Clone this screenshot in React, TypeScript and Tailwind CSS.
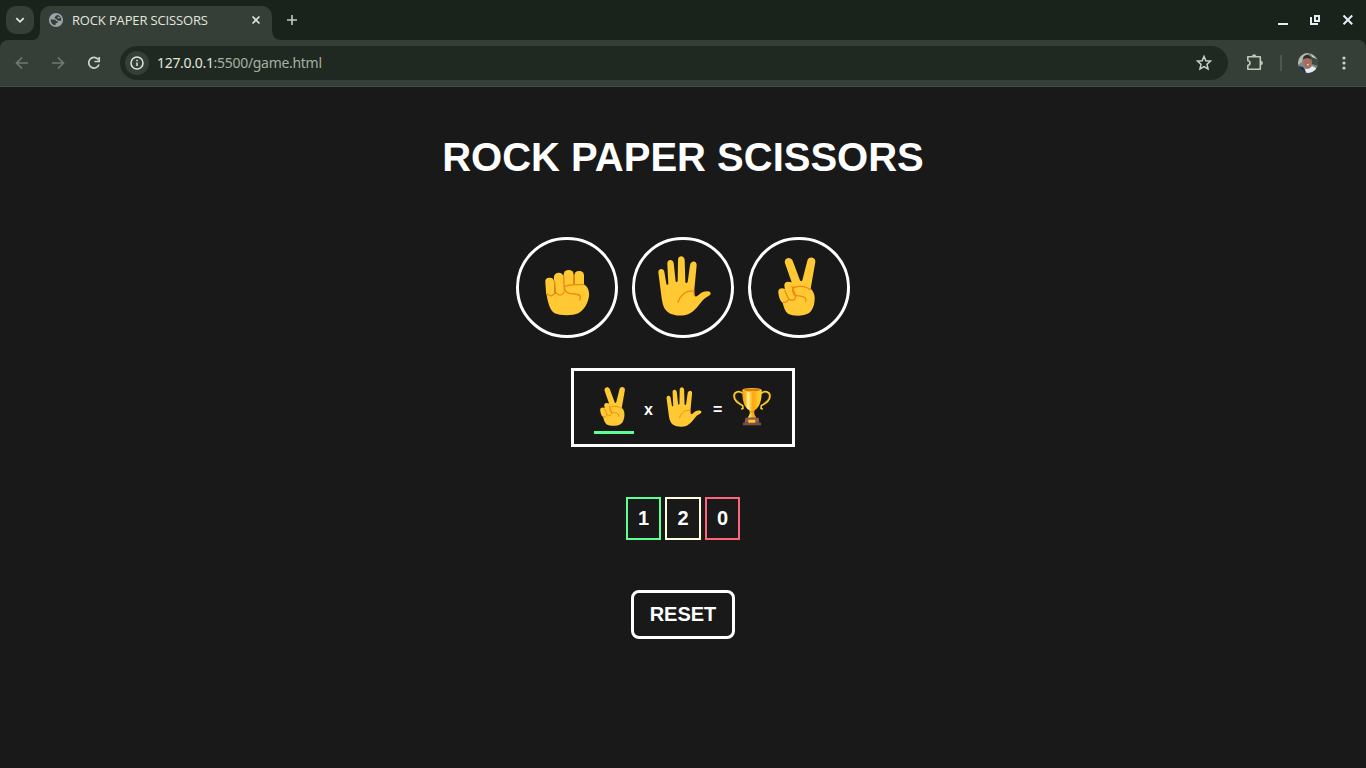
import React from "react";

const fill = "#ffc933";
const line = "#f08a12";

function Rock({ className }: { className: string }) {
  return (
    <svg viewBox="81 77 180 180" className={className}>
      <g fill={fill}>
        <path d="M109 185C112 215 120 240 134 249C150 257 189 257 205 249C224 238 234 218 237 198C239 180 232 165 218 161L165 163L140 190Z" />
        <rect x="193" y="122" width="29" height="55" rx="13" />
        <rect x="161" y="119" width="30" height="60" rx="14" />
        <rect x="133" y="127" width="29" height="70" rx="14" transform="rotate(-4 147 160)" />
        <rect x="107" y="142" width="26" height="55" rx="12" transform="rotate(-4 120 170)" />
      </g>
      <path d="M134 155L137 187M161 137L163 180M191 135L192 162M112 190Q123 204 137 187Q151 203 163 185M163 170C169 162 192 164 220 162M164 172C163 184 174 191 193 191C210 191 215 199 209 209" fill="none" stroke={line} strokeWidth="4" strokeLinecap="round" />
    </svg>
  );
}

function Paper({ className }: { className: string }) {
  return (
    <svg viewBox="81 77 180 180" className={className}>
      <path d="M97 126C97 114 113 113 115 124L121 160Q122 165 127 162L124 100C123 86 141 85 143 98L149 153Q150 158 155 153L156 89C156 74 175 74 176 89L178 155Q180 161 185 155L192 105C194 90 213 90 212 105L204 188C204 198 207 199 213 198C222 190 229 184 242 183C252 182 257 188 252 194C245 200 235 203 229 211C216 226 207 242 188 251C169 259 142 256 129 248C113 238 110 222 107 204Z" fill={fill} />
      <path d="M156 216C164 192 178 180 204 182Q203 188 205 196" fill="none" stroke={line} strokeWidth="4" strokeLinecap="round" />
    </svg>
  );
}

function Scissors({ className }: { className: string }) {
  return (
    <svg viewBox="81 77 180 180" className={className}>
      <path d="M129 99C124 82 146 77 152 91L174 150Q178 156 181 150L196 91C199 76 222 79 220 95L206 175C214 182 219 194 218 207C217 226 212 241 200 249C184 258 153 258 138 250C128 242 125 229 122 217C114 213 110 196 109 187C107 174 120 171 129 176C125 162 127 156 136 154L149 156Z" fill={fill} />
      <path d="M129 181L140 206Q136 217 124 216M140 206C148 213 161 210 161 198L150 168M161 198C150 187 148 173 160 170C174 166 195 169 204 178M158 193C170 201 180 194 189 202Q194 207 191 214" fill="none" stroke={line} strokeWidth="4" strokeLinecap="round" strokeLinejoin="round" />
    </svg>
  );
}

function Trophy({ className }: { className: string }) {
  return (
    <svg viewBox="156 72 120 120" className={className}>
      <defs>
        <linearGradient id="cup" x1="0" x2="1" y1="0" y2="0">
          <stop offset="0" stopColor="#f79a16" />
          <stop offset=".18" stopColor="#ffb71c" />
          <stop offset=".3" stopColor="#fff3b0" />
          <stop offset=".44" stopColor="#ffca28" />
          <stop offset=".55" stopColor="#fda31a" />
          <stop offset=".8" stopColor="#ffc51f" />
          <stop offset="1" stopColor="#ffd52e" />
        </linearGradient>
      </defs>
      <path d="M191 96C178 84 162 89 162 102C162 119 177 125 188 131L189 139L184 142M241 96C254 84 270 89 270 102C270 119 255 125 244 131L243 139L248 142" fill="none" stroke="#ffca28" strokeWidth="5" />
      <path d="M165 97C163 109 171 117 181 123M267 97C269 109 261 117 251 123" fill="none" stroke="#f59a16" strokeWidth="1.5" />
      <path d="M187 84H245C246 114 239 136 224 145C221 150 222 158 229 167H203C210 159 211 150 208 145C192 136 186 113 187 84Z" fill="url(#cup)" />
      <ellipse cx="216" cy="84" rx="29" ry="6" fill="#ffca28" />
      <ellipse cx="216" cy="84" rx="25" ry="3.8" fill="#d97b12" />
      <path d="M209 148Q216 152 223 148" stroke="#e78a12" strokeWidth="3" fill="none" />
      <path d="M196 167H236L238 182H194Z" fill="#8d5b50" />
      <path d="M189 182H243V190H189Z" fill="#795046" />
      <rect x="205" y="173" width="21" height="9" rx="1" fill="#ffc928" />
    </svg>
  );
}

function Avatar() {
  return (
    <svg viewBox="0 0 20 20" className="size-5">
      <defs><clipPath id="face"><circle cx="10" cy="10" r="10" /></clipPath></defs>
      <g clipPath="url(#face)">
        <path fill="#7f8880" d="M0 0h20v20H0z" />
        <path fill="#b5b9b1" d="M0 3l6-3h5L5 4 4 9 0 12z" />
        <path fill="#414a43" d="M13 3l7 4v6l-6-2z" />
        <path fill="#d6d8d2" d="M13 1l6 5-5-2z" />
        <path fill="#202d4a" d="M0 13l5 1 4 6H0z" />
        <path fill="#e8e9f4" d="M8 20l-1-4 5-1 2-2 4 2 1 5z" />
        <path fill="#a96c58" d="M5.500 6l3-2L13 6l1 5-2 4-3 1-3-4z" />
        <path fill="#302c31" d="M5 6.500q0-4.500 4-4.500t4.500 4.500L10 5 7 5.500z" />
        <path fill="#f6e9e3" d="M8.500 11.500l2.500-.7-1 1.900z" />
      </g>
    </svg>
  );
}

function Browser() {
  return (
    <header className="h-[87px] bg-[#1a231b] font-['Noto_Sans',sans-serif]">
      <div className="flex h-10 items-start pl-1.5">
        <button className="mt-1.5 flex size-7 items-center justify-center rounded-[10px] bg-[#363f37]">
          <svg viewBox="0 0 28 28" className="size-7" fill="none" stroke="#e2e5df" strokeWidth="1.8"><path d="M10.300 12.200l3.700 3.600 3.700-3.600" /></svg>
        </button>
        <div className="mt-1.5 flex h-[34px] w-[6px] items-end justify-end">
          <svg viewBox="0 0 6 10" className="h-2.5 w-1.5"><path d="M6 0v10H0Q6 8 6 0" fill="#363f37" /></svg>
        </div>
        <div className="mt-1.5 flex h-[34px] w-[232px] items-start rounded-t-[10px] bg-[#363f37] pt-[6px] pl-2">
          <svg viewBox="0 0 16 16" className="size-4 shrink-0">
            <circle cx="8" cy="8" r="7.100" fill="#9ca1aa" />
            <path d="M9.200 2.700C8.600 4.300 7 3.700 6.700 5.200S8.500 6.600 9 7.800 11 9 13.300 8.400C13.500 5.500 11.800 3.300 9.200 2.700z" fill="#363f37" />
            <path d="M2.600 7.600H6c2 0 1.500 1.600 3 1.700s1 1.700-.3 1.800-1 1-1.300 2.300C4.600 13.100 2.500 10.800 2.600 7.600z" fill="#363f37" />
            <path d="M9.500 4.800h2.200v1.500H9.500z" fill="#9ca1aa" />
          </svg>
          <span className="ml-2 w-[176px] whitespace-nowrap font-['Open_Sans',sans-serif] text-[13px] leading-[17px] tracking-[-0.15px] text-[#e3e6df]">ROCK PAPER SCISSORS</span>
          <svg viewBox="0 0 16 16" className="size-4 shrink-0" stroke="#e2e5df" strokeWidth="1.600"><path d="M4.500 4.500l7 7M11.500 4.500l-7 7" /></svg>
        </div>
        <svg viewBox="0 0 10 10" className="mt-[30px] size-2.5"><path d="M0 0v10h10Q0 10 0 0" fill="#363f37" /></svg>
        <svg viewBox="0 0 20 20" className="mt-2.5 size-5" stroke="#c5cdbf" strokeWidth="1.600"><path d="M10 5v10M5 10h10" /></svg>
        <div className="ml-auto flex pt-2.5">
          <svg viewBox="0 0 100 20" className="h-5 w-[100px]" fill="none" stroke="#e8ebf1">
            <path d="M12 14h10" strokeWidth="2" />
            <path d="M49 6h4v5h-4zM45 7v7h7" strokeWidth="2" />
            <path d="M77.500 5.500l8.700 8.700M86.200 5.500l-8.700 8.700" strokeWidth="2" />
          </svg>
        </div>
      </div>
      <div className="flex h-[47px] items-center rounded-t-lg border-b border-[#4a4c48] bg-[#363f37]">
        <svg viewBox="0 0 120 46" className="h-[46px] w-[120px] shrink-0" fill="none" strokeWidth="1.600">
          <path d="M28 23H17M22 17.500L16.500 23l5.500 5.500M52 23h11M58 17.500l5.500 5.500-5.500 5.500" stroke="#747970" />
          <path d="M98.200 19.500A5.300 5.300 0 1 0 99 24.500M99.200 17v4.500h-4.700" stroke="#ced5c9" strokeWidth="1.700" />
        </svg>
        <div className="flex h-[34px] w-[1108px] items-center rounded-full bg-[#202921] pl-[5px]">
          <div className="flex size-6 items-center justify-center rounded-full bg-[#363f37]">
            <svg viewBox="0 0 16 16" className="size-4" fill="none" stroke="#e1e5df" strokeWidth="1.500"><circle cx="8" cy="8" r="6" /><path d="M8 7.500v3.500M8 4.700v1.500" /></svg>
          </div>
          <span className="ml-2 text-[14px] leading-5 tracking-[-0.3px] text-[#a5afa3]"><span className="text-[#e1e6df]">127.0.0.1</span>:5500/game.html</span>
          <svg viewBox="0 0 20 20" className="mr-[14px] ml-auto size-5" fill="none" stroke="#ccd2c7" strokeWidth="1.500"><path d="M10 3.500l1.850 4.300 4.650.4-3.500 3.100 1.050 4.600L10 13.500l-4.050 2.400L7 11.300 3.500 8.200l4.650-.4z" /></svg>
        </div>
        <svg viewBox="0 0 20 20" className="ml-[17px] size-5 shrink-0" fill="none" stroke="#bdcbb9" strokeWidth="1.600" strokeLinejoin="round"><path d="M2.800 3.800H15.300V16.200H2.800V12.500Q5 12 5 10T2.800 7.500z" /><path d="M7.100 3.500a2 2 0 014 0zM15.600 8a2 2 0 010 4z" fill="#bdcbb9" strokeWidth=".5" /></svg>
        <div className="ml-[15px] h-4 w-[2px] bg-[#50584e]" />
        <div className="ml-4"><Avatar /></div>
        <svg viewBox="0 0 16 16" className="ml-[18px] size-4" fill="#cbd4c6"><circle cx="8" cy="3" r="1.600" /><circle cx="8" cy="8" r="1.600" /><circle cx="8" cy="13" r="1.600" /></svg>
      </div>
    </header>
  );
}

export default function App() {
  const choice = "flex h-[101px] w-[102px] items-start justify-center rounded-full border-[3px] border-white pt-[15.5px]";
  return (
    <div className="h-screen overflow-hidden bg-[#191919] font-['Liberation_Sans',sans-serif] font-bold text-white">
      <div className="font-normal"><Browser /></div>
      <main className="flex flex-col items-center pt-[47px]">
        <h1 className="text-[40px] leading-[46px]">ROCK PAPER SCISSORS</h1>
        <div className="mt-[57px] flex gap-[14px]">
          <button aria-label="Rock" className={choice}><Rock className="size-[60px]" /></button>
          <button aria-label="Paper" className={choice}><Paper className="size-[60px]" /></button>
          <button aria-label="Scissors" className={choice}><Scissors className="size-[60px]" /></button>
        </div>
        <div className="mt-[30px] flex h-[79px] w-[224px] items-start gap-[10px] border-[3px] border-white px-5 pt-[15px] text-[16px] leading-[18px]">
          <div className="h-12 shrink-0 border-b-[3px] border-[#5cff94]"><Scissors className="size-10" /></div>
          <span className="mt-[15px]">x</span>
          <div className="shrink-0 pt-[0.7px]"><Paper className="size-10" /></div>
          <span className="mt-[15px]">=</span>
          <Trophy className="size-10 shrink-0" />
        </div>
        <div className="mt-[50px] flex gap-[4.450px] text-xl leading-[23px]">
          <span className="border-2 border-[#5cff94] px-[10px] py-2">1</span>
          <span className="border-2 border-[#fffde1] px-[10px] py-2">2</span>
          <span className="border-2 border-[#ff6478] px-[10px] py-2">0</span>
        </div>
        <button className="mt-[50px] h-[49px] w-[104px] rounded-lg border-[3px] border-white text-xl leading-[23px] font-bold">RESET</button>
      </main>
    </div>
  );
}
